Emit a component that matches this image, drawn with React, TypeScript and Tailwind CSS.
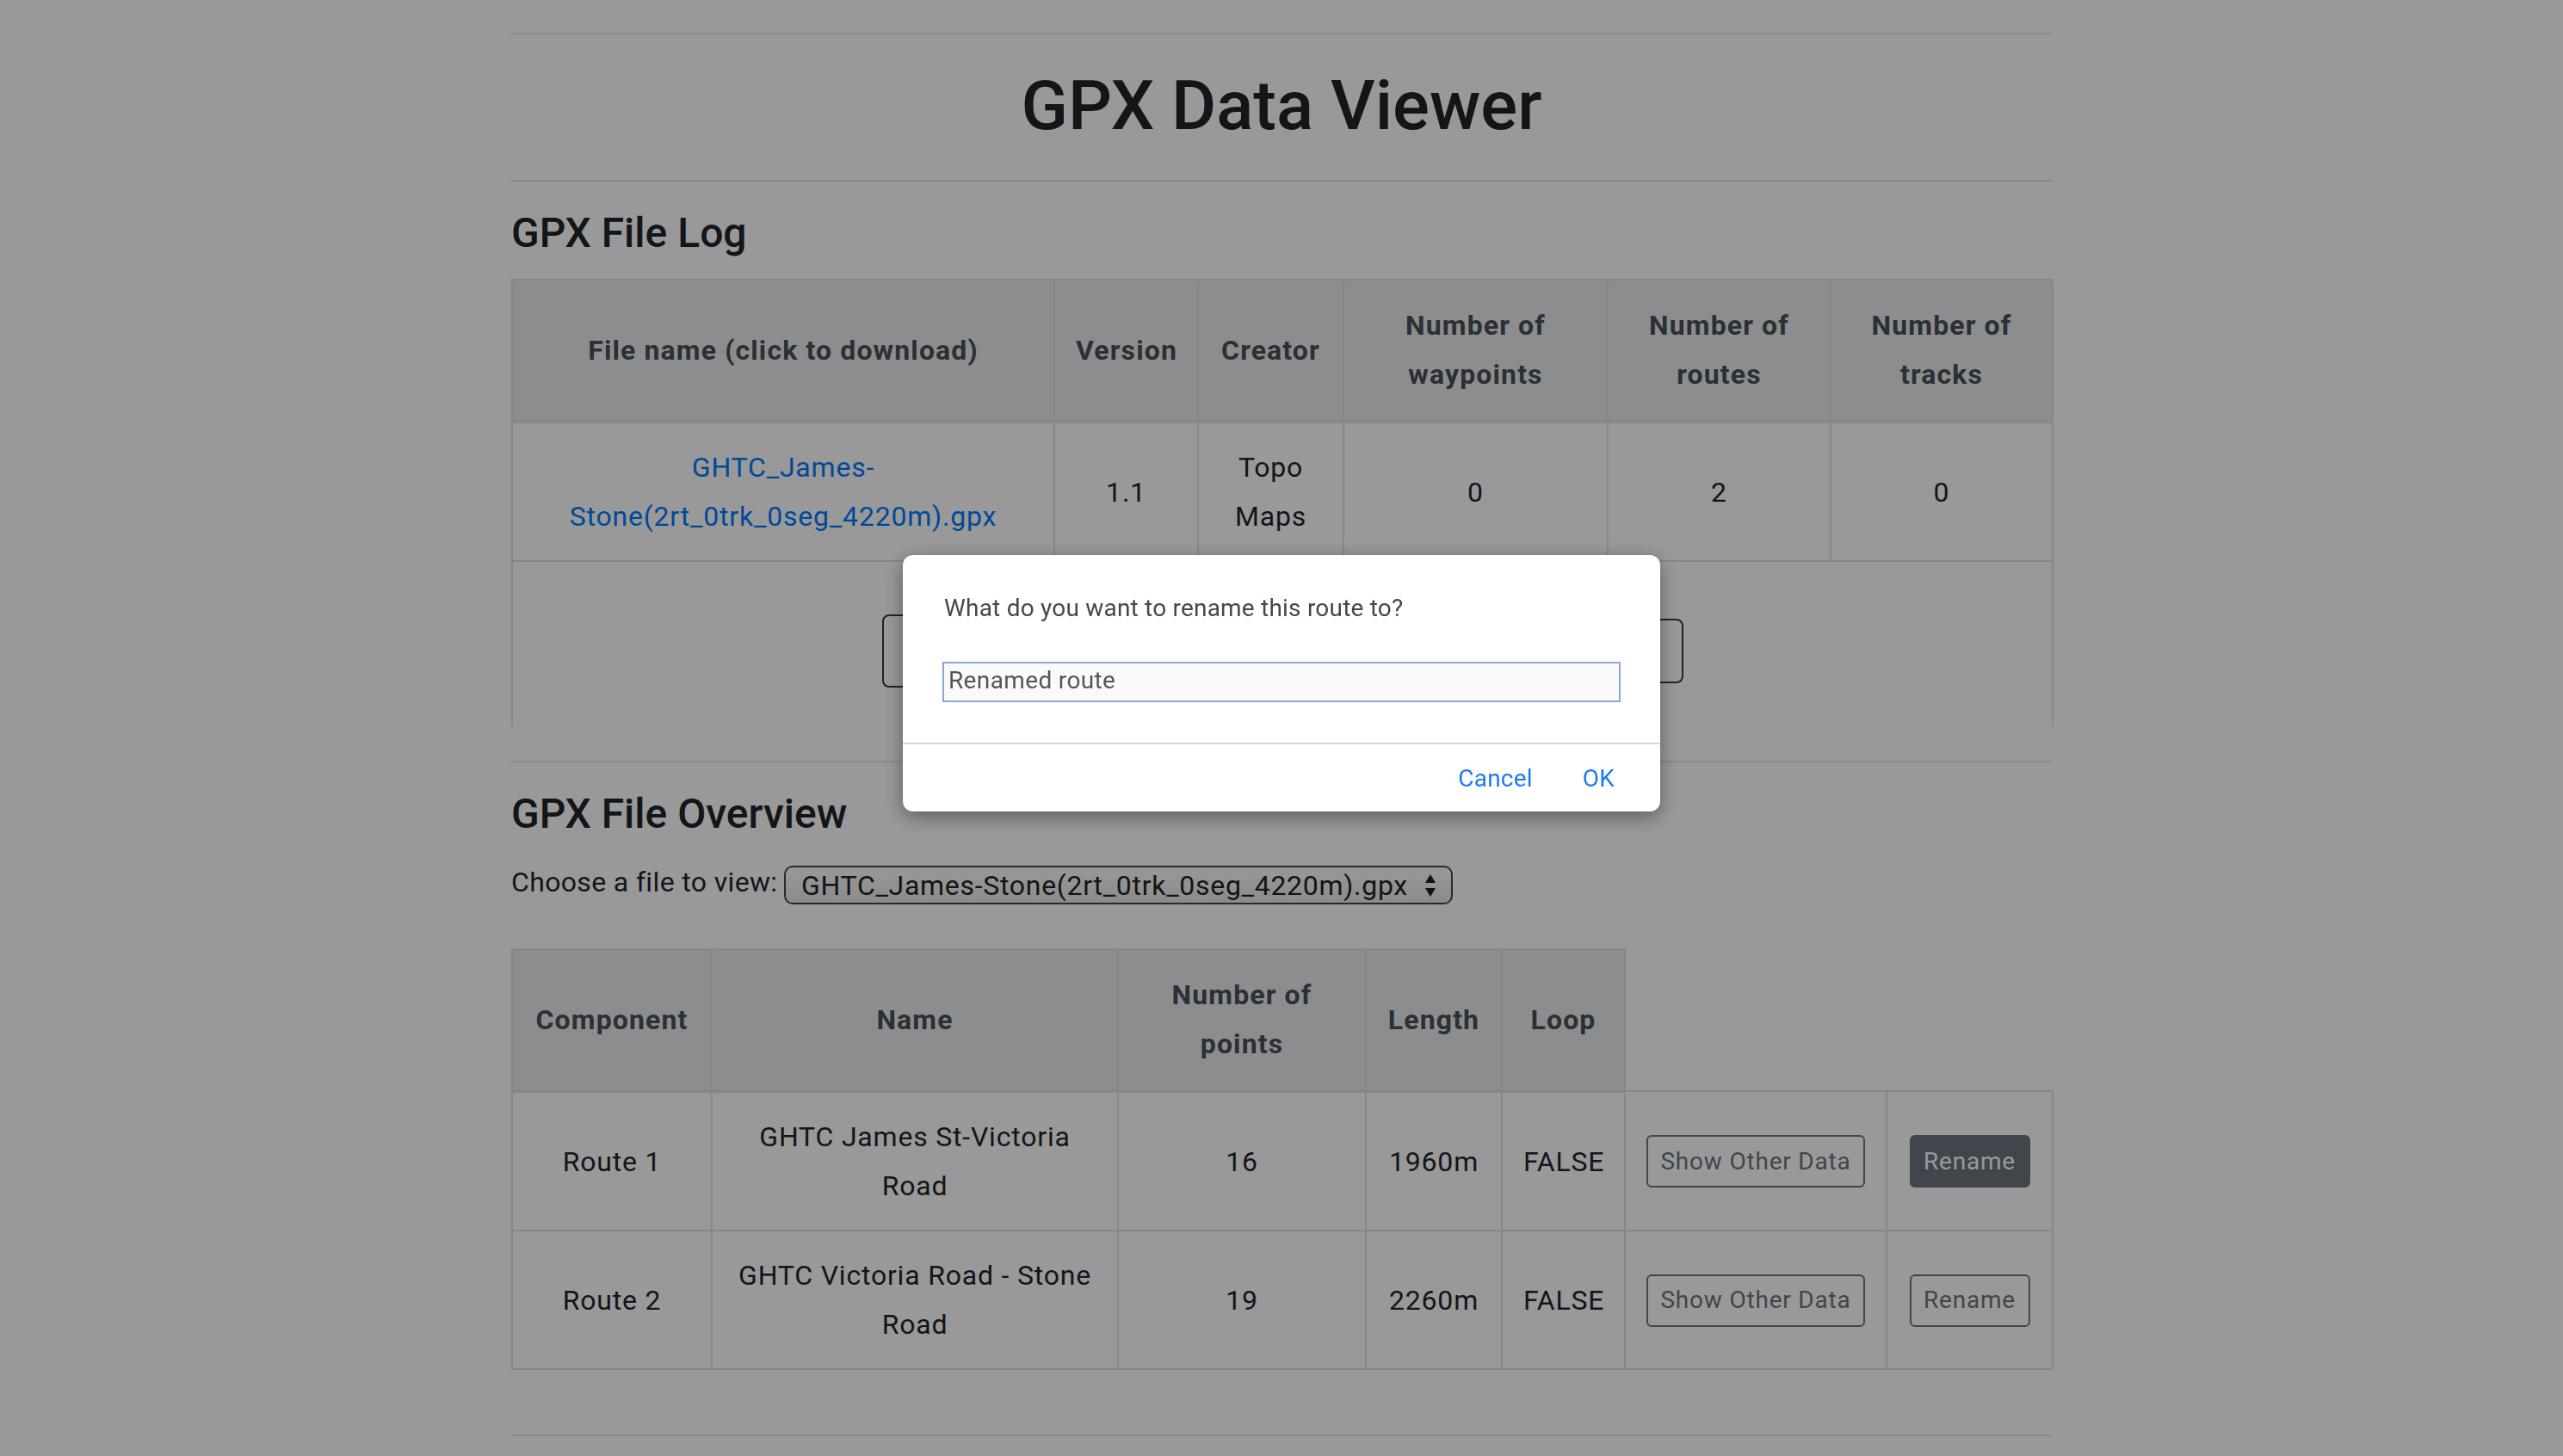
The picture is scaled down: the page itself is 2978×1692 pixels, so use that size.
import React from "react";

const F = "font-[family-name:Roboto,'Noto_Sans',sans-serif]";

const thCls =
  "border-2 border-b-4 border-[#dee2e6] bg-[#e9ecef] text-[#495057] font-bold tracking-[0.035em] px-6 py-6 align-middle text-center";
const tdCls =
  "border-2 border-[#dee2e6] px-6 pt-[23px] pb-[22px] align-middle text-center text-[#212529] tracking-[0.025em]";

function UpDown() {
  return (
    <svg width="20" height="28" viewBox="0 0 20 28" className="shrink-0">
      <path d="M10 1 L16 11 L4 11 Z" fill="#1f1f1f" />
      <path d="M10 27 L16 17 L4 17 Z" fill="#1f1f1f" />
    </svg>
  );
}

export default function App() {
  return (
    <div className={`${F} relative min-h-screen bg-white text-[#212529]`}>
      <div className="mx-auto w-[1790px] pt-[38px]">
        <hr className="border-0 border-t-2 border-[#e6e6e6]" />
        <h1 className="mt-[35px] text-center text-[80px] leading-[96px] font-medium text-[#212529]">
          GPX Data Viewer
        </h1>
        <hr className="mt-[38px] border-0 border-t-2 border-[#e6e6e6]" />

        <h4 className="mt-[31px] text-[48px] leading-[58px] font-medium">GPX File Log</h4>

        <table className="mt-[24px] w-full table-fixed border-collapse text-[32px] leading-[57px]">
          <colgroup>
            <col className="w-[630px]" />
            <col className="w-[167px]" />
            <col className="w-[169px]" />
            <col className="w-[307px]" />
            <col className="w-[259px]" />
            <col className="w-[258px]" />
          </colgroup>
          <thead>
            <tr>
              <th className={thCls}>File name (click to download)</th>
              <th className={thCls}>Version</th>
              <th className={thCls}>Creator</th>
              <th className={thCls}>
                Number of
                <br />
                waypoints
              </th>
              <th className={thCls}>
                Number of
                <br />
                routes
              </th>
              <th className={thCls}>
                Number of
                <br />
                tracks
              </th>
            </tr>
          </thead>
          <tbody>
            <tr>
              <td className={tdCls}>
                <a className="text-[#007bff]" href="#">
                  GHTC_James-
                  <br />
                  Stone(2rt_0trk_0seg_4220m).gpx
                </a>
              </td>
              <td className={tdCls}>1.1</td>
              <td className={tdCls}>
                Topo
                <br />
                Maps
              </td>
              <td className={tdCls}>0</td>
              <td className={tdCls}>2</td>
              <td className={tdCls}>0</td>
            </tr>
            <tr>
              <td
                colSpan={6}
                className="border-2 border-b-0 border-[#dee2e6] px-6 pt-[61px] pb-[45px]"
              >
                <div className="mx-auto flex h-[85px] w-[931px] items-center justify-between">
                  <div className="flex h-[85px] w-[380px] items-center justify-center rounded-[8px] border-2 border-[#343a40] text-[#343a40]">
                    Choose File
                  </div>
                  <div className="flex h-[75px] w-[260px] items-center justify-center rounded-[8px] border-2 border-[#343a40] text-[#343a40]">
                    Upload File
                  </div>
                </div>
              </td>
            </tr>
          </tbody>
        </table>

        <hr className="mt-[40px] border-0 border-t-2 border-[#e6e6e6]" />

        <h4 className="mt-[31px] text-[48px] leading-[58px] font-medium">GPX File Overview</h4>

        <div className="mt-[31px] flex h-[45px] items-start text-[32px]">
          <span className="-mt-[5px] w-[317px] shrink-0 whitespace-nowrap leading-[48px] tracking-[0.011em] text-[#212529]">
            Choose a file to view:
          </span>
          <div className="flex h-[45px] w-[777px] items-center justify-between rounded-[10px] border-2 border-[#474747] bg-gradient-to-b from-white to-[#e8e8e8] pl-[18px] pr-[14px] leading-[38px] tracking-[0.022em] text-[#222]">
            <span>GHTC_James-Stone(2rt_0trk_0seg_4220m).gpx</span>
            <UpDown />
          </div>
        </div>

        <table className="mt-[51px] w-full table-fixed border-collapse text-[32px] leading-[57px]">
          <colgroup>
            <col className="w-[232px]" />
            <col className="w-[472px]" />
            <col className="w-[288px]" />
            <col className="w-[158px]" />
            <col className="w-[143px]" />
            <col className="w-[304px]" />
            <col className="w-[193px]" />
          </colgroup>
          <thead>
            <tr>
              <th className={thCls}>Component</th>
              <th className={thCls}>Name</th>
              <th className={thCls}>
                Number of
                <br />
                points
              </th>
              <th className={thCls}>Length</th>
              <th className={thCls}>Loop</th>
            </tr>
          </thead>
          <tbody>
            <tr>
              <td className={tdCls}>Route 1</td>
              <td className={tdCls}>
                GHTC James St-Victoria
                <br />
                Road
              </td>
              <td className={tdCls}>16</td>
              <td className={tdCls}>1960m</td>
              <td className={tdCls}>FALSE</td>
              <td className={tdCls}>
                <button className="inline-flex h-[61px] w-[254px] items-center justify-center rounded-[6px] border-2 border-[#6c757d] text-[28px] leading-[42px] text-[#6c757d]">
                  Show Other Data
                </button>
              </td>
              <td className={tdCls}>
                <button className="inline-flex h-[61px] w-[140px] items-center justify-center rounded-[6px] border-2 border-[#6c757d] bg-[#6c757d] text-[28px] leading-[42px] text-white">
                  Rename
                </button>
              </td>
            </tr>
            <tr>
              <td className={tdCls}>Route 2</td>
              <td className={tdCls}>
                GHTC Victoria Road - Stone
                <br />
                Road
              </td>
              <td className={tdCls}>19</td>
              <td className={tdCls}>2260m</td>
              <td className={tdCls}>FALSE</td>
              <td className={tdCls}>
                <button className="inline-flex h-[61px] w-[254px] items-center justify-center rounded-[6px] border-2 border-[#6c757d] text-[28px] leading-[42px] text-[#6c757d]">
                  Show Other Data
                </button>
              </td>
              <td className={tdCls}>
                <button className="inline-flex h-[61px] w-[140px] items-center justify-center rounded-[6px] border-2 border-[#6c757d] text-[28px] leading-[42px] text-[#6c757d]">
                  Rename
                </button>
              </td>
            </tr>
          </tbody>
        </table>

        <hr className="mt-[75px] border-0 border-t-2 border-[#e6e6e6]" />
      </div>

      <div className="fixed inset-0 z-10 bg-black/40" />

      <div className="fixed left-[1049px] top-[645px] z-20 h-[298px] w-[880px] rounded-[12px] bg-white tracking-[0.013em] shadow-[0_6px_22px_rgba(0,0,0,0.4)]">
        <p className="pl-[48px] pt-[42px] text-[28px] leading-[40px] text-[#474747]">
          What do you want to rename this route to?
        </p>
        <input
          readOnly
          defaultValue="Renamed route"
          className="ml-[46px] mt-[42px] box-border block h-[47px] w-[788px] border-2 border-[#8ea6d3] bg-[#fafafa] px-[5px] pb-[5px] text-[28px] tracking-[0.013em] text-[#555] outline-none"
        />
        <div className="mt-[47px] h-[2px] bg-[#d6d6d6]" />
        <div className="flex justify-end gap-[58px] pr-[53px] pt-[20px] text-[28px] leading-[40px] text-[#1f7aef]">
          <span>Cancel</span>
          <span>OK</span>
        </div>
      </div>
    </div>
  );
}
